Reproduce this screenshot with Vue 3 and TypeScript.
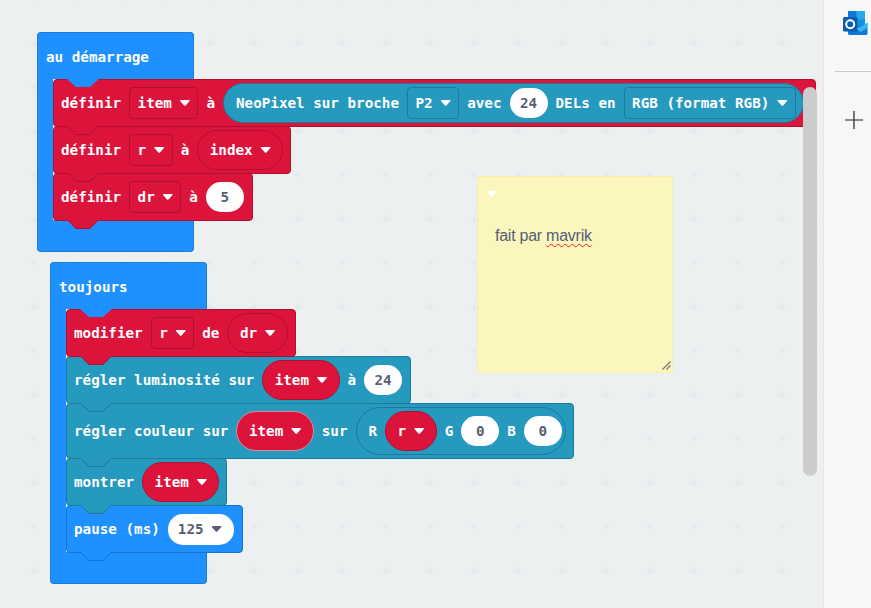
<script setup lang="ts">
// plus marks of the workspace grid, every 44px
const gridSize = 44
</script>

<template>
  <div class="page">
    <main class="workspace">
      <svg class="grid" width="100%" height="100%" aria-hidden="true">
        <defs>
          <pattern id="plus" :width="gridSize" :height="gridSize" patternUnits="userSpaceOnUse" x="12" y="21">
            <path d="M22 18v8M18 22h8" stroke="#e0e4e6" stroke-width="1" fill="none" />
          </pattern>
        </defs>
        <rect width="100%" height="100%" fill="url(#plus)" />
      </svg>

      <!-- au démarrage -->
      <section class="hat hat-start">
        <div class="hat-head">au démarrage</div>
        <div class="hat-arm">
          <div class="block red wide">
            <span>définir</span>
            <span class="field"><span>item</span><i class="caret" /></span>
            <span>à</span>
            <span class="value teal neopixel">
              <span>NeoPixel sur broche</span>
              <span class="field"><span>P2</span><i class="caret" /></span>
              <span>avec</span>
              <span class="num">24</span>
              <span>DELs en</span>
              <span class="field"><span>RGB (format RGB)</span><i class="caret" /></span>
            </span>
          </div>
          <div class="block red">
            <span>définir</span>
            <span class="field"><span>r</span><i class="caret" /></span>
            <span>à</span>
            <span class="value red"><span>index</span><i class="caret" /></span>
          </div>
          <div class="block red">
            <span>définir</span>
            <span class="field"><span>dr</span><i class="caret" /></span>
            <span>à</span>
            <span class="num">5</span>
          </div>
        </div>
        <div class="hat-foot" />
      </section>

      <!-- toujours -->
      <section class="hat hat-forever">
        <div class="hat-head">toujours</div>
        <div class="hat-arm">
          <div class="block red">
            <span>modifier</span>
            <span class="field"><span>r</span><i class="caret" /></span>
            <span>de</span>
            <span class="value red"><span>dr</span><i class="caret" /></span>
          </div>
          <div class="block teal">
            <span>régler luminosité sur</span>
            <span class="value red"><span>item</span><i class="caret" /></span>
            <span>à</span>
            <span class="num">24</span>
          </div>
          <div class="block teal tall">
            <span>régler couleur sur</span>
            <span class="value red selected"><span>item</span><i class="caret" /></span>
            <span>sur</span>
            <span class="value teal rgb">
              <span>R</span>
              <span class="value red"><span>r</span><i class="caret" /></span>
              <span>G</span>
              <span class="num">0</span>
              <span>B</span>
              <span class="num">0</span>
            </span>
          </div>
          <div class="block teal">
            <span>montrer</span>
            <span class="value red"><span>item</span><i class="caret" /></span>
          </div>
          <div class="block blue">
            <span>pause (ms)</span>
            <span class="num drop"><span>125</span><i class="caret" /></span>
          </div>
        </div>
        <div class="hat-foot" />
      </section>

      <!-- commentaire -->
      <aside class="note">
        <i class="caret" />
        <p class="note-text">fait par <span class="typo">mavrik</span></p>
        <svg class="grip" width="9" height="9" viewBox="0 0 9 9" aria-hidden="true">
          <path d="M0.5 8.5L8.5 0.5M4.5 8.5L8.5 4.5" stroke="#77777a" stroke-width="1.2" fill="none" />
        </svg>
      </aside>

      <div class="scrollbar" />
    </main>

    <nav class="sidebar">
      <svg class="outlook" width="25" height="24" viewBox="0 0 25 24" aria-label="Outlook">
        <rect x="5" y="0" width="17" height="17" rx="1.5" fill="#1490df" />
        <rect x="5" y="0" width="8.5" height="8.5" fill="#0f78d4" />
        <rect x="13.5" y="0" width="8.5" height="8.5" fill="#28a8ea" />
        <path d="M5 13l9 5.5L24.5 12v10.5A1.5 1.5 0 0 1 23 24H6.5A1.5 1.5 0 0 1 5 22.5z" fill="#0f78d4" />
        <path d="M24.5 11.5L14 18.5l4 2.6 6.5-4.3z" fill="#35b8f1" />
        <rect x="0" y="6" width="14.5" height="14.5" rx="1.5" fill="#0a5cad" />
        <circle cx="7.2" cy="13.2" r="4" fill="none" stroke="#fff" stroke-width="2" />
      </svg>
      <hr class="divider" />
      <svg class="add" width="18" height="18" viewBox="0 0 18 18" aria-label="Ajouter">
        <path d="M9 0v18M0 9h18" stroke="#222" stroke-width="1.2" fill="none" />
      </svg>
    </nav>
  </div>
</template>

<style>
html,
body {
  margin: 0;
  overflow: hidden;
}
</style>

<style scoped>
.page {
  display: flex;
  width: 871px;
  height: 608px;
  overflow: hidden;
}

.workspace {
  position: relative;
  flex: 1;
  overflow: hidden;
  background: #ecf0f1;
}

.grid {
  position: absolute;
  inset: 0;
}

/* ── Hat blocks ────────────────────────────────────────── */
.hat {
  position: absolute;
  z-index: 1;
  width: 157px;
  font: bold 14.25px "DejaVu Sans Mono", monospace;
  color: #fff;
  white-space: nowrap;
}

.hat-start {
  left: 37px;
  top: 32px;
}

.hat-forever {
  left: 50px;
  top: 262px;
}

.hat-head {
  position: relative;
  z-index: 9;
  box-sizing: border-box;
  height: 47px;
  padding: 14px 0 0 8px;
  line-height: 20px;
  background: #1e90ff;
  border: 1px solid #1a7ed9;
  border-bottom: 0;
  border-radius: 4px 4px 0 0;
}

.hat-head::after,
.block::before,
.block::after {
  content: "";
  position: absolute;
  width: 32px;
  height: 8px;
  clip-path: polygon(0 0, 100% 0, 72% 100%, 28% 100%);
}

.hat-head::after {
  left: 29px;
  bottom: -8px;
  background: #1e90ff;
}

.hat-arm {
  display: flex;
  flex-direction: column;
  align-items: flex-start;
  width: 140px;
  margin-left: 1px;
  border-left: 15px solid #1e90ff;
  box-shadow: -1px 0 0 #1a7ed9;
}

.hat-foot {
  box-sizing: border-box;
  height: 32px;
  margin-top: -1px;
  background: #1e90ff;
  border: 1px solid #1a7ed9;
  border-top: 0;
  border-radius: 0 0 4px 4px;
}

/* ── Stacked blocks ────────────────────────────────────── */
.block {
  position: relative;
  display: flex;
  align-items: center;
  gap: 8px;
  box-sizing: border-box;
  height: 48px;
  margin-top: -1px;
  padding: 0 7px;
  border: 1px solid;
  border-radius: 4px;
}

.block:first-child {
  margin-top: 0;
}

.block:nth-child(1) { z-index: 5; }
.block:nth-child(2) { z-index: 4; }
.block:nth-child(3) { z-index: 3; }
.block:nth-child(4) { z-index: 2; }
.block:nth-child(5) { z-index: 1; }

.block::before {
  left: 13px;
  bottom: -9px;
  height: 9px;
  background: var(--edge);
}

.block::after {
  left: 14px;
  bottom: -8px;
  width: 30px;
  background: var(--fill);
}

.block.tall {
  height: 56px;
}

.block.wide {
  padding-right: 11px;
}

.block > .num:last-child {
  margin-right: 1px;
}

/* ── Fields and values ─────────────────────────────────── */
.field {
  display: flex;
  align-items: center;
  gap: 8px;
  box-sizing: border-box;
  height: 32px;
  padding: 0 7.5px;
  border: 1px solid rgba(0, 0, 0, 0.2);
  border-radius: 4px;
}

.value {
  display: flex;
  align-items: center;
  gap: 8px;
  box-sizing: border-box;
  height: 40px;
  padding: 0 11.5px;
  border-width: 1px;
  border-style: solid;
  border-radius: 20px;
}

.neopixel {
  padding: 0 7px 0 12px;
}

.rgb {
  height: 48px;
  padding: 0 3px 0 12px;
  border-radius: 24px;
}

.red {
  --fill: #dc143c;
  --edge: #b01030;
  background: #dc143c;
  border-color: #b01030;
}

.teal {
  --fill: #2699bf;
  --edge: #1e7a99;
  background: #2699bf;
  border-color: #1e7a99;
}

.blue {
  --fill: #1e90ff;
  --edge: #1873cc;
  background: #1e90ff;
  border-color: #1873cc;
}

.value.selected {
  border-color: #e08a9c;
}

.num {
  display: flex;
  align-items: center;
  justify-content: center;
  gap: 8px;
  box-sizing: border-box;
  min-width: 38px;
  height: 30px;
  padding: 0 10px;
  border-radius: 15px;
  background: #fff;
  color: #575e75;
}

.num.drop {
  height: 31px;
  padding: 0 12.5px 0 10px;
}

.caret {
  flex: none;
  display: block;
  width: 10px;
  height: 6px;
  background: currentColor;
  clip-path: path("M1 0H9Q10.5 0 9.7 1L5.8 5.4Q5 6.2 4.2 5.4L.3 1Q-.5 0 1 0Z");
}

/* ── Comment ───────────────────────────────────────────── */
.note {
  position: absolute;
  left: 477px;
  top: 176px;
  box-sizing: border-box;
  width: 196px;
  height: 197px;
  padding: 14px 8.5px;
  background: #fbf6bd;
  border: 1px solid #f9efa9;
  border-radius: 2px;
  color: #fff;
}

.note-text {
  margin: 29px 0 0 8.5px;
  font: 16px/20px "Liberation Sans", Arial, sans-serif;
  letter-spacing: -0.25px;
  color: #575e75;
}

.typo {
  text-decoration: underline wavy #f01c24 1px;
  text-underline-offset: 2px;
}

.grip {
  position: absolute;
  right: 1px;
  bottom: 2px;
}

.scrollbar {
  position: absolute;
  z-index: 2;
  left: 803px;
  top: 87px;
  width: 14px;
  height: 389px;
  border-radius: 7px;
  background: #cccccc;
}

/* ── Right sidebar ─────────────────────────────────────── */
.sidebar {
  display: flex;
  flex-direction: column;
  align-items: flex-start;
  box-sizing: border-box;
  flex: none;
  width: 48px;
  padding-top: 11px;
  background: #f7f7f7;
  border-left: 1px solid #e3e5e6;
}

.outlook {
  margin-left: 19px;
}

.divider {
  align-self: stretch;
  box-sizing: border-box;
  height: 1px;
  margin: 36px 0 0 11px;
  border: 0;
  background: #c8c8c8;
}

.add {
  margin: 39px 0 0 21px;
}
</style>
